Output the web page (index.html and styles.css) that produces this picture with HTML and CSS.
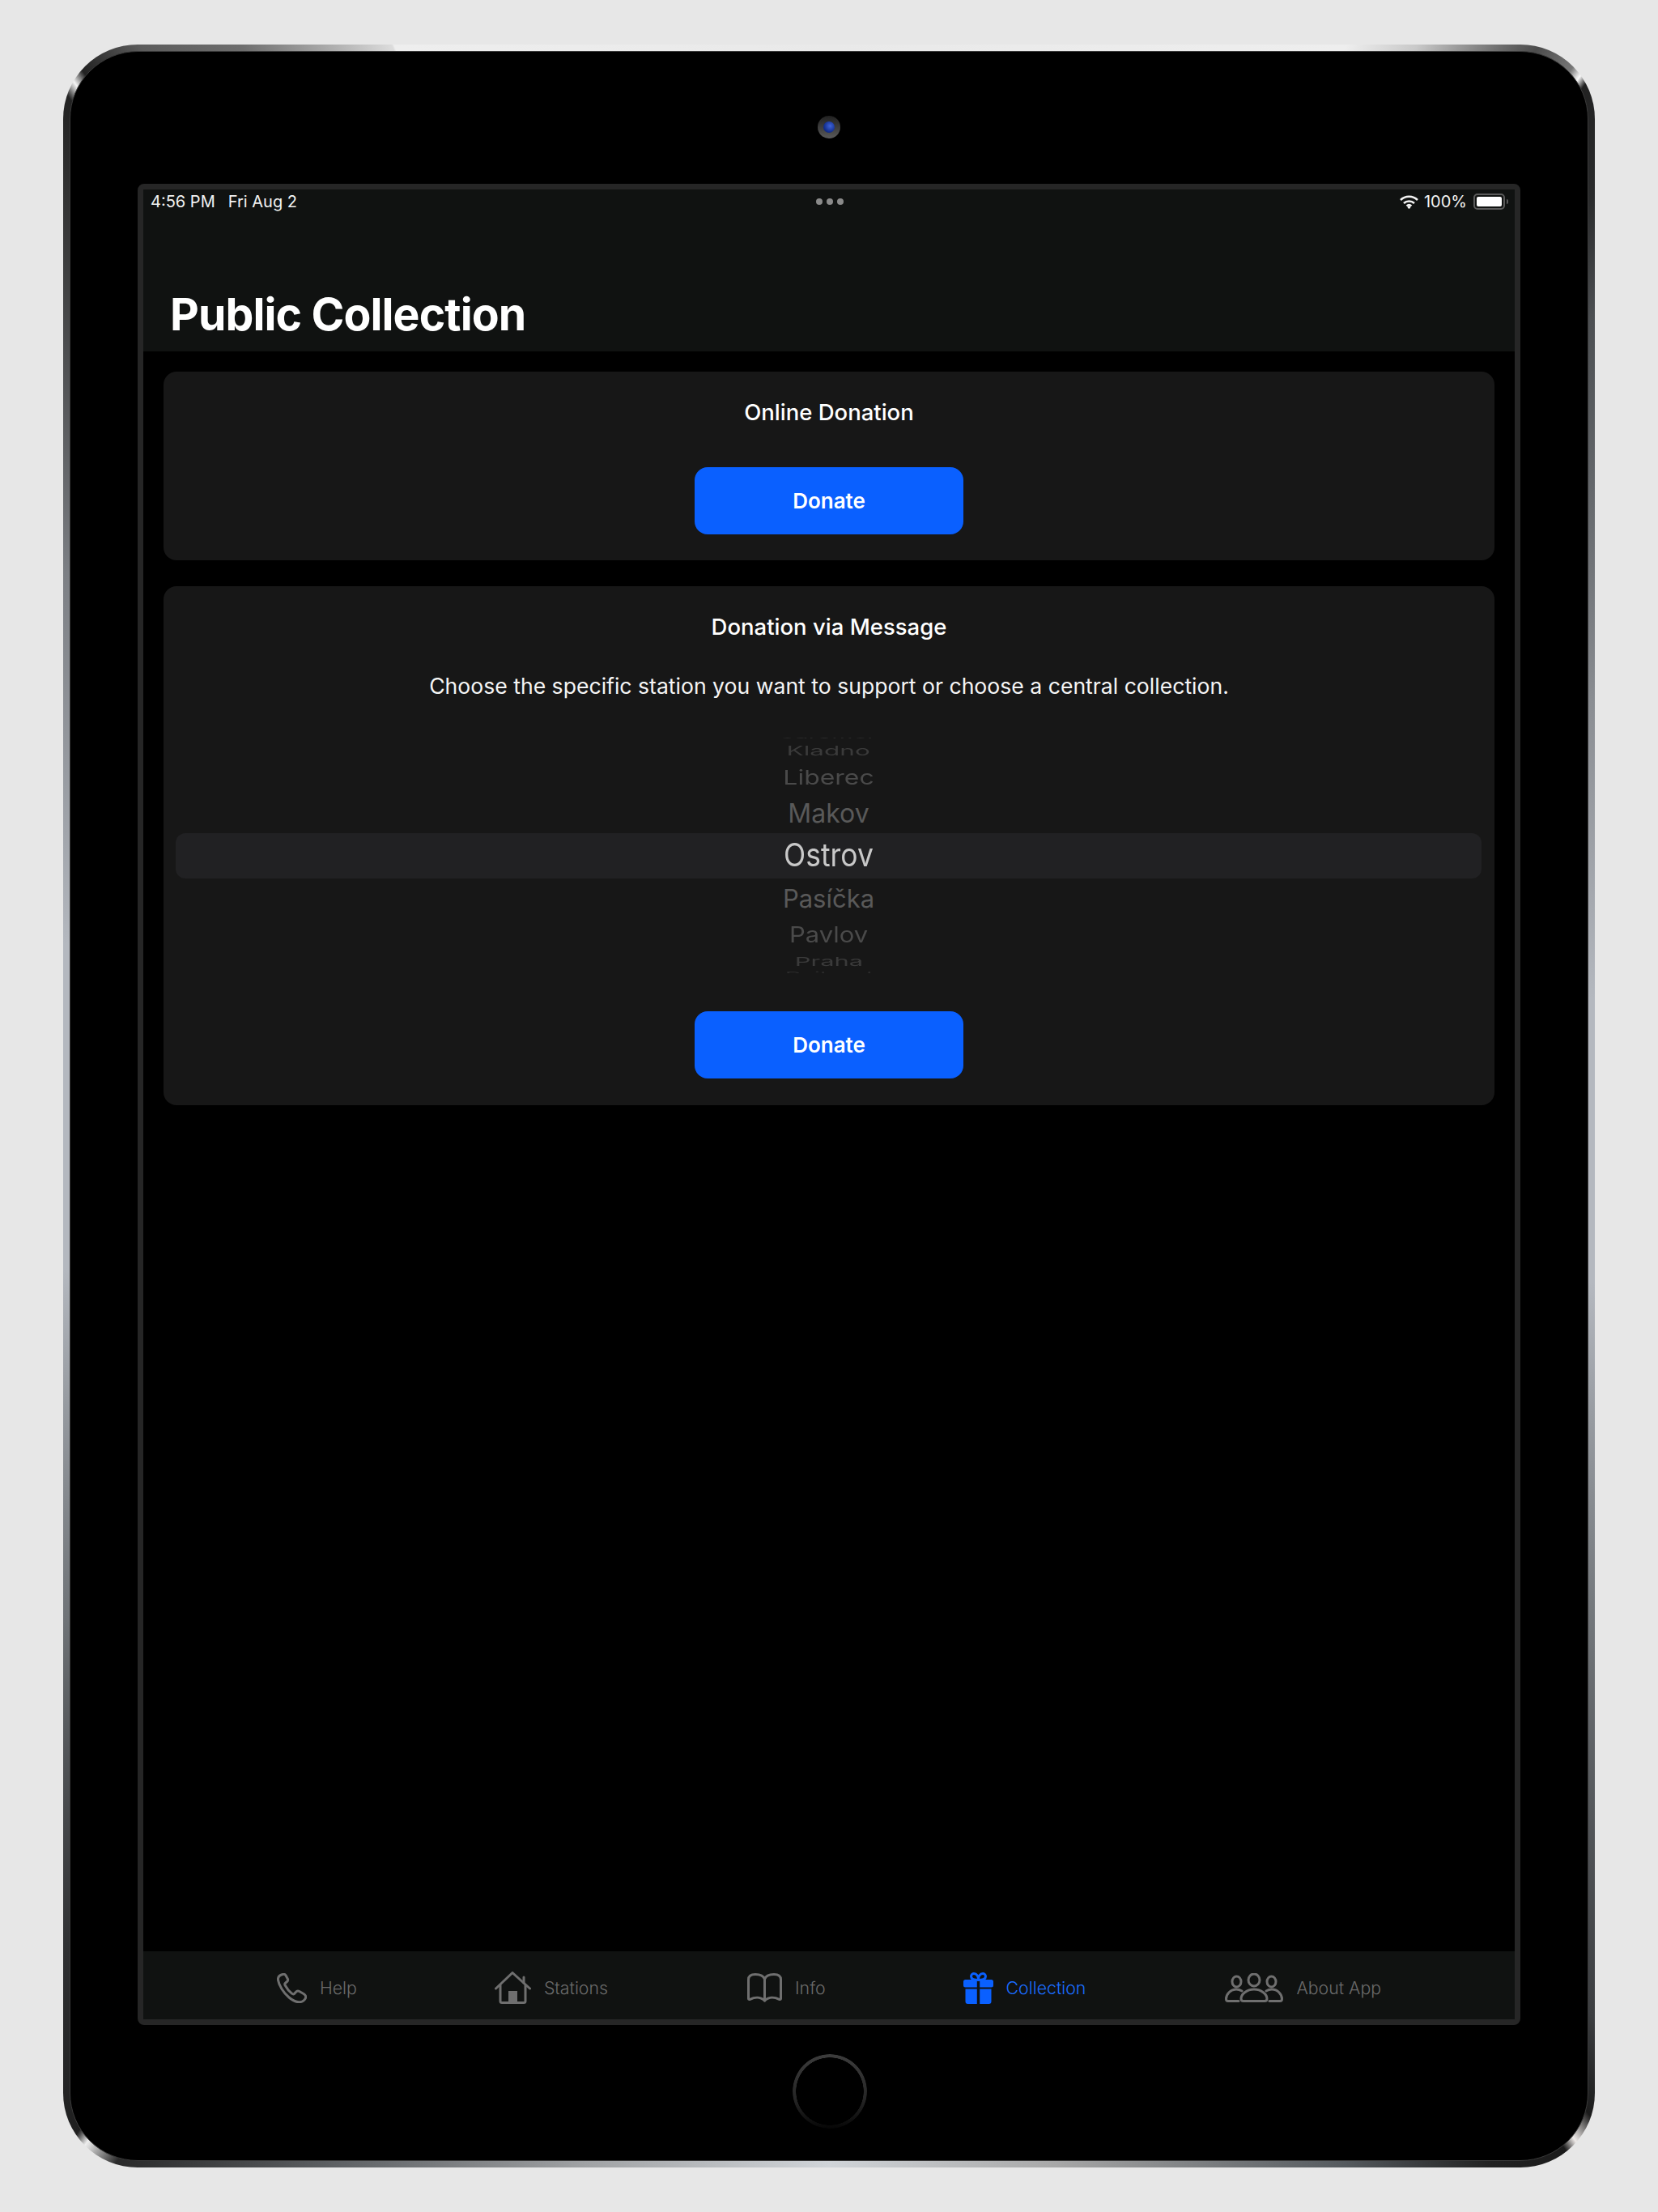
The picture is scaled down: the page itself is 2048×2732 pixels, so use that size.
FILE: index.html
```html
<!DOCTYPE html>
<html lang="en">
<head>
    <meta charset="UTF-8">
    <meta name="viewport" content="width=device-width, initial-scale=1.0">
    <title>Public Collection</title>
    <link rel="stylesheet" href="styles.css">
</head>
<body>

    <div class="device">
        <div class="bezel">
            <!-- Camera -->
            <div class="bezel-top">
                <div class="camera"><div class="lens"></div></div>
            </div>

            <div class="screen">
                <!-- Status bar and title -->
                <header class="nav">
                    <div class="status">
                        <div class="status-left">
                            <span>4:56 PM</span>
                            <span>Fri Aug 2</span>
                        </div>
                        <div class="dots"><i></i><i></i><i></i></div>
                        <div class="status-right">
                            <svg class="wifi" viewBox="0 0 23 17">
                                <path d="M1 6 A15 15 0 0 1 22 6" />
                                <path d="M5 10 A9.5 9.5 0 0 1 18 10" />
                                <path d="M8.6 13.4 A4.5 4.5 0 0 1 14.4 13.4" />
                                <circle cx="11.5" cy="15" r="1.8" />
                            </svg>
                            <span>100%</span>
                            <div class="battery"><div class="battery-level"></div></div>
                            <div class="battery-nub"></div>
                        </div>
                    </div>
                    <h1>Public Collection</h1>
                </header>

                <main class="content">
                    <section class="card card-online">
                        <h2>Online Donation</h2>
                        <button class="donate">Donate</button>
                    </section>

                    <section class="card card-message">
                        <h2>Donation via Message</h2>
                        <p>Choose the specific station you want to support or choose a central collection.</p>

                        <!-- Wheel picker -->
                        <div class="picker">
                            <div class="picker-rows">
                                <div class="row row-edge-top"><span>Jaroměř</span></div>
                                <div class="row row-kladno"><span>Kladno</span></div>
                                <div class="row row-liberec"><span>Liberec</span></div>
                                <div class="row row-makov"><span>Makov</span></div>
                                <div class="row row-selected"><span>Ostrov</span></div>
                                <div class="row row-pasicka"><span>Pasíčka</span></div>
                                <div class="row row-pavlov"><span>Pavlov</span></div>
                                <div class="row row-praha"><span>Praha</span></div>
                                <div class="row row-edge-bottom"><span>Rajhrad</span></div>
                            </div>
                        </div>

                        <button class="donate">Donate</button>
                    </section>
                </main>

                <!-- Tab bar -->
                <nav class="tabs">
                    <a class="tab tab-help">
                        <svg class="tab-icon" width="37" height="37" viewBox="0 0 37 37">
                            <path d="M7 1.5 C3.5 2.5 1 5 1.500 8.500 C2.500 15 8 24 15 30 C19.500 33.800 24 36 28 35.800 C31.500 35.500 35.500 33 35.800 29.500 C36 27.500 34.500 26.500 33 25.500 L27.800 22.500 C26 21.500 24.500 22 23.300 23.500 L21.500 25.500 C20.500 26.300 19.500 26 18.500 25.200 C15 22.500 12 18.500 10 14.800 C9.500 13.500 9.700 12.700 10.700 12 L12.500 10.500 C13.700 9.500 13.900 8.300 13.300 7 L11 2.800 C10 1.200 8.500 1 7 1.500 Z" />
                        </svg>
                        <span>Help</span>
                    </a>
                    <a class="tab tab-stations">
                        <svg class="tab-icon" width="45" height="40" viewBox="0 0 45 40">
                            <path d="M1.500 21 L22 1.500 L43.500 21" />
                            <path d="M36 7 V14" />
                            <path d="M7 17 V36.500 Q7 38.500 9 38.500 H36 Q38 38.500 38 36.500 V17" />
                            <rect class="solid" x="17" y="24" width="11" height="14" />
                        </svg>
                        <span>Stations</span>
                    </a>
                    <a class="tab tab-info">
                        <svg class="tab-icon" width="43" height="36" viewBox="0 0 43 36">
                            <path d="M1.500 31.500 V8 C1.500 3.500 5 1.500 10 1.500 C15 1.500 20 3 21.500 7.500 C23 3 28 1.500 33 1.500 C38 1.500 41.500 3.500 41.500 8 V31.500 C41.500 32.500 40.500 32.800 39.500 32.300 C33 29 26 29.500 21.500 34 C17 29.500 10 29 3.500 32.300 C2.500 32.800 1.500 32.500 1.500 31.500 Z" />
                            <path d="M21.500 7.500 V34" />
                        </svg>
                        <span>Info</span>
                    </a>
                    <a class="tab tab-collection active">
                        <svg class="tab-icon" width="37" height="39" viewBox="0 0 37 39">
                            <path class="ribbon" d="M18.500 9.500 C14 9.500 9.500 8.500 9.500 5 C9.500 2.500 11.500 1.500 13 1.500 C16.500 1.500 18.500 5 18.500 9.500 C18.500 5 20.500 1.500 24 1.500 C25.500 1.500 27.500 2.500 27.500 5 C27.500 8.500 23 9.500 18.500 9.500 Z" />
                            <path class="solid" d="M2.500 9 H16.800 V18.500 H2.500 Q0 18.500 0 16 V11.500 Q0 9 2.500 9 Z M20.200 9 H34.500 Q37 9 37 11.500 V16 Q37 18.500 34.500 18.500 H20.200 Z" />
                            <path class="solid" d="M2.500 20.500 H16.800 V39 H5.500 Q2.500 39 2.500 36 Z M20.200 20.500 H34.500 V36 Q34.500 39 31.500 39 H20.200 Z" />
                        </svg>
                        <span>Collection</span>
                    </a>
                    <a class="tab tab-about">
                        <svg class="tab-icon" width="72" height="36" viewBox="0 0 72 36">
                            <ellipse cx="14.500" cy="10.500" rx="5.500" ry="6.500" />
                            <ellipse cx="36" cy="8.500" rx="7" ry="7.500" />
                            <ellipse cx="57.500" cy="10.500" rx="5.500" ry="6.500" />
                            <path d="M21 22 C18.500 20.500 16.500 20 14 20 C7 20 1.500 26 1.500 32 Q1.500 34.500 4 34.500 H17" />
                            <path d="M51 22 C53.500 20.500 55.500 20 58 20 C65 20 70.500 26 70.500 32 Q70.500 34.500 68 34.500 H55" />
                            <path d="M36 20 C27 20 20 26 20 31.500 Q20 34.500 23 34.500 H49 Q52 34.500 52 31.500 C52 26 45 20 36 20 Z" />
                        </svg>
                        <span>About App</span>
                    </a>
                </nav>
            </div>

            <!-- Home button -->
            <div class="bezel-bottom">
                <div class="home"></div>
            </div>
        </div>
    </div>

</body>
</html>
```

FILE: styles.css
```css
* {
    margin: 0;
    padding: 0;
    box-sizing: border-box;
}

body {
    font-family: Inter, "Liberation Sans", sans-serif;
    background-color: #e7e7e7;
    color: #fff;
    width: 2048px;
    height: 2732px;
    overflow: hidden;
    padding-top: 55px;
}

/* Device frame */
.device {
    width: 1892px;
    height: 2622px;
    margin: 0 auto;
    padding: 8px;
    border-radius: 92px;
    background: conic-gradient(
        #e9e9e9 0deg,
        #eeeeee 26deg,
        #c9c9c9 29deg,
        #6a6a6a 32.500deg,
        #4c4c4c 33.800deg,
        #777 35.6deg,
        #fafafa 36.1deg,
        #222 36.5deg,
        #2a2b2c 40deg,
        #4c4f52 44deg,
        #8a8d92 62deg,
        #b4b8bf 82deg,
        #b4b8bf 103deg,
        #6f7377 125deg,
        #3c3e41 140deg,
        #1b1b1b 143deg,
        #eeeae8 144.2deg,
        #1a1a1a 144.8deg,
        #222 148deg,
        #555a5e 154deg,
        #a8a8a8 168deg,
        #d0d4d8 180deg,
        #a0a2a4 193deg,
        #5e6164 205deg,
        #2a2a2a 214deg,
        #eeeeee 215.6deg,
        #1f1f1f 216.2deg,
        #2f3032 222deg,
        #6f7377 236deg,
        #b4b8bf 258deg,
        #b4b8bf 282deg,
        #7c7f84 305deg,
        #333 320deg,
        #222 323deg,
        #f5f5f5 323.6deg,
        #222 324.2deg,
        #5c5c5c 327deg,
        #6e6e6e 331deg,
        #dcdcdc 337.6deg,
        #eeeeee 337.7deg,
        #e9e9e9 360deg
    );
}

.bezel {
    height: 100%;
    border-radius: 84px;
    background-color: #000;
    border: 1px solid #3a3a3a;
    display: flex;
    flex-direction: column;
    align-items: center;
}

.bezel-top {
    height: 163px;
    width: 100%;
    display: flex;
    justify-content: center;
    padding-top: 79px;
}

.camera {
    width: 28px;
    height: 28px;
    border-radius: 50%;
    background: linear-gradient(#202020, #5a5a5a);
    display: flex;
    align-items: center;
    justify-content: center;
}

.lens {
    width: 14px;
    height: 14px;
    border-radius: 50%;
    background: radial-gradient(circle at 60% 40%, #3f63d8, #14308f 60%, #0a1a5c);
}

.bezel-bottom {
    flex: 1;
    width: 100%;
    display: flex;
    justify-content: center;
    padding: 36px 0 0 2px;
}

.home {
    width: 92px;
    height: 92px;
    border-radius: 50%;
    background: linear-gradient(#3c3c3c 0%, #262626 60%, #060606 100%);
    -webkit-mask: radial-gradient(circle, transparent 41.500px, #000 42px);
    mask: radial-gradient(circle, transparent 41.500px, #000 42px);
}

/* Screen */
.screen {
    width: 1708px;
    height: 2274px;
    border: 7px solid #262626;
    border-radius: 8px;
    background-color: #000;
    display: flex;
    flex-direction: column;
}

.nav {
    height: 200px;
    background-color: #101211;
    flex-shrink: 0;
}

.status {
    height: 30px;
    padding: 0 8px 0 9px;
    display: grid;
    grid-template-columns: 1fr auto 1fr;
    align-items: center;
    font-size: 20px;
    color: #f2f2f2;
}

.status-left {
    display: flex;
    gap: 16px;
}

.dots {
    display: flex;
    gap: 5px;
}

.dots i {
    display: block;
    width: 8px;
    height: 8px;
    border-radius: 50%;
    background-color: #8a8a8a;
}

.status-right {
    display: flex;
    justify-content: flex-end;
    align-items: center;
}

.wifi {
    width: 23px;
    height: 17px;
    margin-right: 7px;
}

.wifi path {
    fill: none;
    stroke: #f2f2f2;
    stroke-width: 2.600;
}

.wifi circle {
    fill: #f2f2f2;
}

.battery {
    width: 39px;
    height: 20px;
    margin-left: 8px;
    border: 2px solid #5a5a5a;
    border-radius: 5px;
    padding: 2px;
}

.battery-level {
    height: 100%;
    background-color: #fff;
    border-radius: 2px;
}

.battery-nub {
    width: 2px;
    height: 6px;
    margin-left: 2px;
    background-color: #5a5a5a;
    border-radius: 0 2px 2px 0;
}

h1 {
    font-size: 55.300px;
    font-weight: 700;
    letter-spacing: -0.9px;
    line-height: 66px;
    padding: 91px 0 0 33px;
}

/* Cards */
.content {
    flex: 1;
    padding: 25px 25px 0;
    display: flex;
    flex-direction: column;
    gap: 32px;
}

.card {
    background-color: #171717;
    border-radius: 16px;
    display: flex;
    flex-direction: column;
    align-items: center;
}

.card-online {
    height: 233px;
    padding-top: 33px;
}

.card-message {
    height: 641px;
    padding-top: 33px;
}

.card h2 {
    font-size: 27.500px;
    font-weight: 500;
    line-height: 34px;
}

.card-online h2 {
    margin-bottom: 51px;
}

.card p {
    font-size: 26.600px;
    line-height: 34px;
    margin-top: 39px;
    color: #f5f5f5;
}

.donate {
    width: 332px;
    height: 83px;
    border: none;
    border-radius: 16px;
    background-color: #0a60ff;
    color: #fff;
    font-family: inherit;
    font-size: 26px;
    font-weight: 600;
}

/* Wheel picker */
.picker {
    width: 100%;
    height: 291px;
    margin: 47px 0 47px;
    overflow: hidden;
}

.picker-rows {
    margin: -10px 16px 0 15px;
    display: flex;
    flex-direction: column;
    align-items: stretch;
}

.row {
    display: flex;
    align-items: center;
    justify-content: center;
    font-size: 35.500px;
    flex-shrink: 0;
    line-height: 1;
}

.row span {
    display: block;
    white-space: nowrap;
}

.row-edge-top { height: 14px; color: #2b2b2b; }
.row-edge-top span { transform: scale(1, 0.4); font-size: 30px; }
.row-kladno { height: 24px; color: #3a3a3a; }
.row-kladno span { transform: scale(1.050, 0.55); font-size: 30px; }
.row-liberec { height: 41px; color: #4a4a4a; }
.row-liberec span { transform: scale(1.030, 0.8); font-size: 31px; }
.row-makov { height: 49px; color: #595959; }
.row-makov span { font-size: 32px; }
.row-selected { height: 56px; color: #c8c8c8; background-color: #212123; border-radius: 12px; }
.row-selected span { transform: scale(1, 1.1); }
.row-pasicka { height: 48px; color: #595959; }
.row-pasicka span { font-size: 31px; }
.row-pavlov { height: 42px; color: #4a4a4a; }
.row-pavlov span { transform: scale(1, 0.85); font-size: 31px; }
.row-praha { height: 23px; color: #3a3a3a; }
.row-praha span { transform: scale(1.030, 0.5); font-size: 30px; }
.row-edge-bottom { height: 14px; color: #2b2b2b; }
.row-edge-bottom span { transform: scale(1, 0.4); font-size: 30px; }

/* Tab bar */
.tabs {
    height: 84px;
    flex-shrink: 0;
    background-color: #101211;
    display: flex;
    align-items: center;
    padding: 6px 0 0 165px;
    font-size: 21.300px;
    font-weight: 300;
    color: #6a6a6a;
}

.tab {
    display: flex;
    align-items: center;
    gap: 16px;
}

.tab-icon {
    fill: none;
    stroke: #6f6f6f;
    stroke-width: 3;
    stroke-linejoin: round;
    stroke-linecap: round;
}

.tab-icon .solid {
    fill: #6f6f6f;
    stroke: none;
}

.tab-stations { margin-left: 170px; }
.tab-info { margin-left: 172px; }
.tab-collection { margin-left: 170px; }
.tab-about { margin-left: 172px; }

.tab.active {
    color: #1a6cff;
}

.tab.active .tab-icon {
    stroke: #0a60ff;
}

.tab.active .solid {
    fill: #0a60ff;
}
```
